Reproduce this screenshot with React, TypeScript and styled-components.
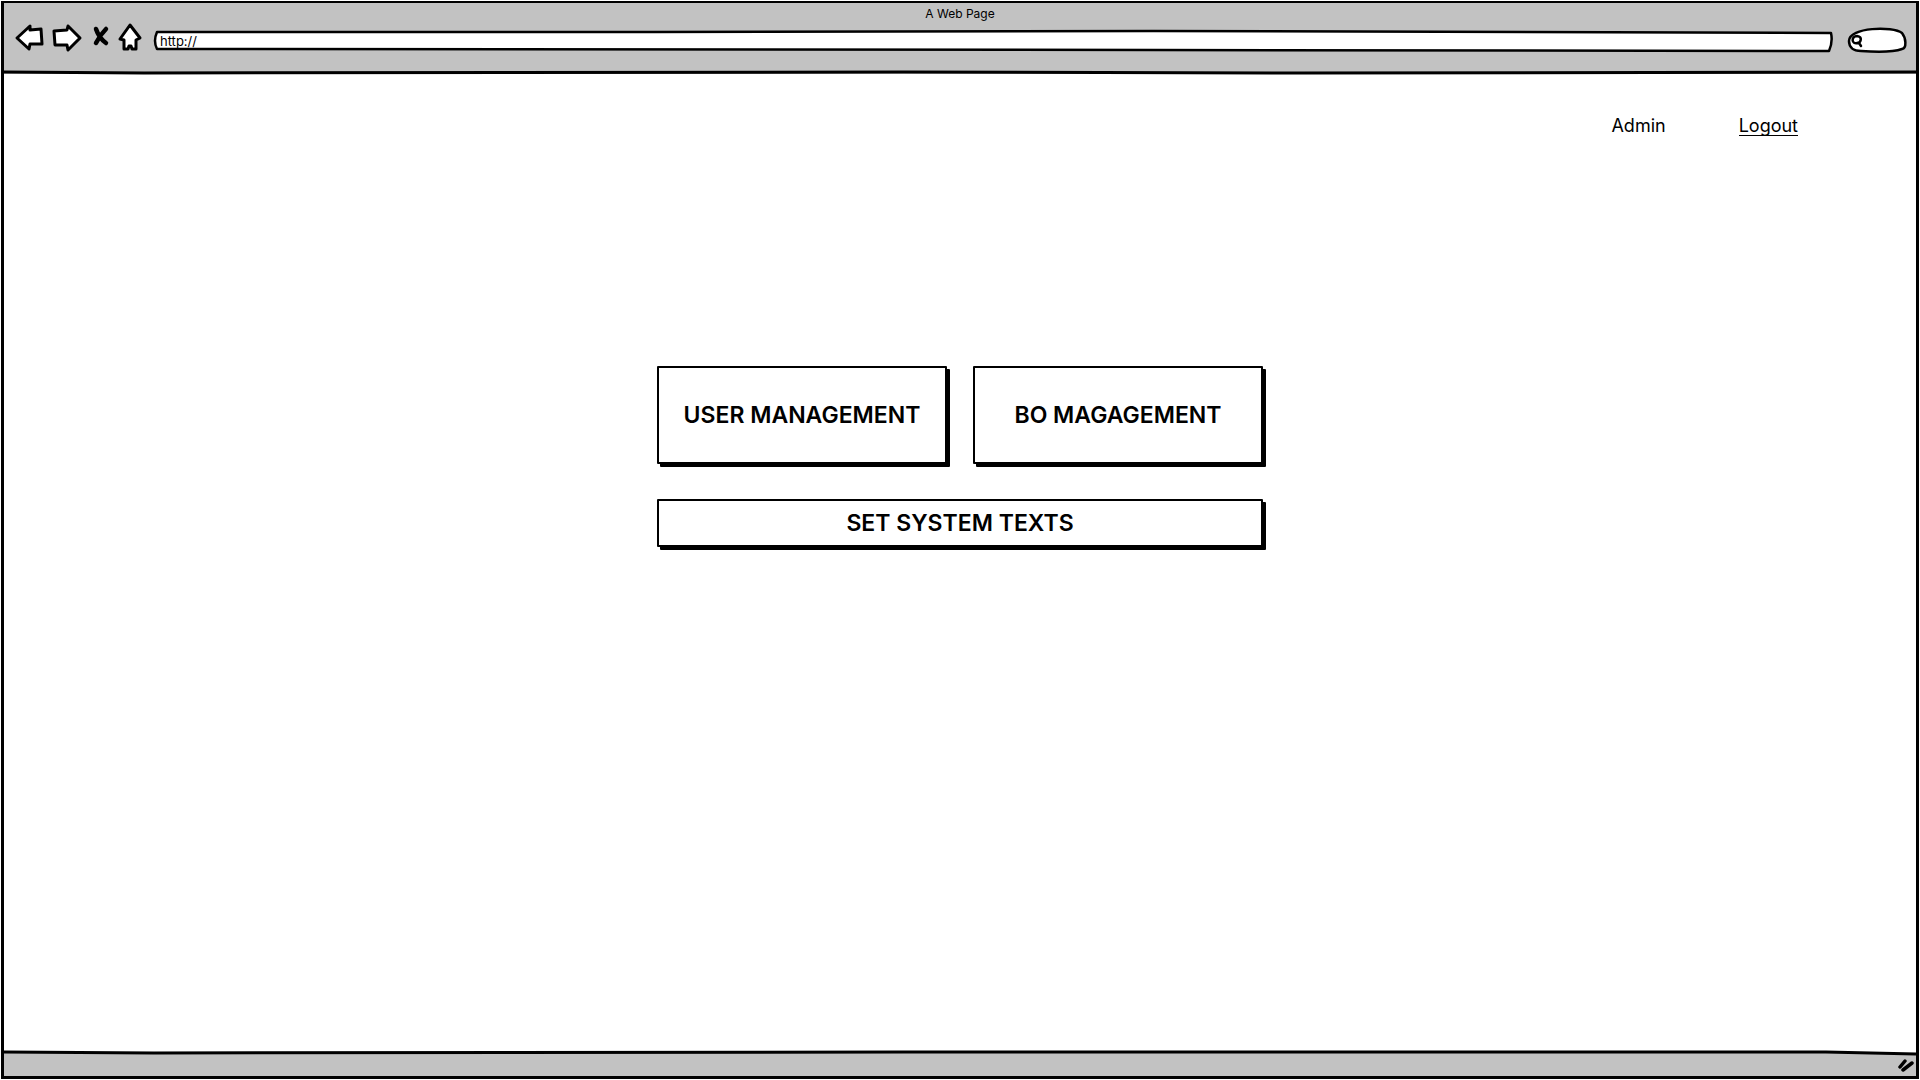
import React from "react";
import styled, { createGlobalStyle } from "styled-components";

const ink = "#000";
const chrome = "#c2c2c2";

const GlobalStyle = createGlobalStyle`
  *, *::before, *::after { box-sizing: border-box; }
  body {
    margin: 0;
    background: #fff;
    color: ${ink};
    font-family: Inter, "Open Sans", sans-serif;
  }
`;

const BrowserFrame = styled.div`
  display: flex;
  flex-direction: column;
  min-height: calc(100vh - 2px);
  margin: 1px;
  border: 3px solid ${ink};
  border-top-width: 2px;
`;

const BrowserHeader = styled.header`
  position: relative;
  height: 71px;
  background: ${chrome};
`;

const PageTitle = styled.div`
  padding-top: 3px;
  text-align: center;
  font-size: 12px;
  line-height: 16px;
`;

const Toolbar = styled.form`
  display: flex;
  align-items: flex-start;
  padding: 1px 9px 0 12px;
`;

const NavButtons = styled.div`
  display: flex;
  gap: 8px;
  margin-right: 13px;
`;

const IconButton = styled.button<{ $width: number }>`
  width: ${(p) => p.$width}px;
  height: 28px;
  padding: 0;
  border: 0;
  background: none;
  cursor: pointer;

  svg { display: block; overflow: visible; }
`;

const SketchBox = styled.label<{ $fixed?: number }>`
  position: relative;
  flex: ${(p) => (p.$fixed ? `0 0 ${p.$fixed}px` : "1 1 auto")};
  height: 24px;
  margin-top: 6px;
  margin-right: ${(p) => (p.$fixed ? 0 : 14)}px;
`;

const Sketch = styled.svg`
  position: absolute;
  inset: 0;
  width: 100%;
  height: 100%;
  overflow: visible;
  pointer-events: none;

  path {
    stroke: ${ink};
    stroke-linejoin: round;
    stroke-linecap: round;
    vector-effect: non-scaling-stroke;
  }
`;

const Field = styled.input`
  position: relative;
  display: block;
  width: 100%;
  height: 24px;
  padding: 0 6px;
  border: 0;
  outline: 0;
  background: transparent;
  color: ${ink};
  font: 13px/16px Inter, "Open Sans", sans-serif;
`;

const Edge = styled.svg<{ $side: "top" | "bottom" }>`
  position: absolute;
  left: 0;
  ${(p) => p.$side}: 0;
  width: 100%;
  height: 6px;
  overflow: visible;
`;

const Content = styled.main`
  flex: 1;
  display: flex;
  flex-direction: column;
  align-items: center;
`;

const AccountBar = styled.nav`
  display: flex;
  align-self: flex-end;
  gap: 73px;
  padding: 40px 118px 0 0;
  font-size: 18px;
  line-height: 24px;
`;

const LogoutLink = styled.a`
  color: ${ink};
  text-decoration: none;
  border-bottom: 1px solid ${ink};
  height: 22px;
`;

const Menu = styled.div`
  display: grid;
  grid-template-columns: 290px 290px;
  gap: 35px 26px;
  margin-top: 228px;
`;

const MenuButton = styled.button<{ $wide?: boolean }>`
  grid-column: ${(p) => (p.$wide ? "1 / -1" : "auto")};
  height: ${(p) => (p.$wide ? 48 : 98)}px;
  padding: 0;
  border: 2px solid ${ink};
  border-radius: 1px;
  box-shadow: 3px 3px 0 ${ink};
  background: #fff;
  color: ${ink};
  font: 600 23px/28px Inter, "Open Sans", sans-serif;
  white-space: nowrap;
  cursor: pointer;
`;

const StatusBar = styled.footer`
  position: relative;
  display: flex;
  justify-content: flex-end;
  height: 24px;
  background: ${chrome};
`;

const Grip = styled.svg`
  margin: 7px 2px 0 0;
`;

const iconStroke = { stroke: ink, strokeWidth: 3, strokeLinejoin: "round" as const, strokeLinecap: "round" as const };

export default function App() {
  return (
    <>
      <GlobalStyle />
      <BrowserFrame>
        <BrowserHeader>
          <PageTitle>A Web Page</PageTitle>
          <Toolbar onSubmit={(e) => e.preventDefault()}>
            <NavButtons>
              <IconButton type="button" aria-label="Back" $width={28}>
                <svg width="28" height="28" viewBox="0 0 28 28">
                  <path d="M1 15 L14 3 L14 7 L25 6 L26 21 L14 21 L13 26 Z" fill="#fff" {...iconStroke} />
                </svg>
              </IconButton>
              <IconButton type="button" aria-label="Forward" $width={30}>
                <svg width="30" height="28" viewBox="0 0 30 28">
                  <path d="M2 8 L15 7 L16 3 L28 15 L16 27 L15 22 L3 22 Z" fill="#fff" {...iconStroke} />
                </svg>
              </IconButton>
              <IconButton type="button" aria-label="Stop" $width={21}>
                <svg width="21" height="28" viewBox="0 0 21 28">
                  <path d="M6 6 Q9 15 16 20 M16 6 Q10 12 6 20" fill="none" stroke={ink} strokeWidth="4.500" strokeLinecap="round" />
                </svg>
              </IconButton>
              <IconButton type="button" aria-label="Home" $width={22}>
                <svg width="22" height="28" viewBox="0 0 22 28">
                  <path d="M11 2 L21 15 L17 17 L17 26 L13 26 L12 23 L10 23 L9 26 L5 26 L5 17 L1 16 Z" fill="#fff" {...iconStroke} />
                </svg>
              </IconButton>
            </NavButtons>
            <SketchBox>
              <Sketch viewBox="0 0 1680 24" preserveAspectRatio="none">
                <path d="M3 3 L500 3 L1000 2 L1678 4 Q1680 13 1676 22 L1000 21 L3 20 Q-1 12 3 3 Z" fill="#fff" strokeWidth="2.500" />
              </Sketch>
              <Field aria-label="Address" defaultValue="http://" />
            </SketchBox>
            <SketchBox $fixed={60}>
              <Sketch viewBox="0 0 60 24">
                <path d="M2 12 C2 -2 46 -3 55 4 C59 9 60 19 55 20 C44 24 28 23 14 22 C6 22 2 18 2 12 Z" fill="#fff" strokeWidth="2.500" />
                <path d="M11 14 C4 16 4 7 10 7 C16 8 14 14 10 14 M12 14 L14 17" fill="none" strokeWidth="2.500" />
              </Sketch>
              <Field aria-label="Search" />
            </SketchBox>
          </Toolbar>
          <Edge $side="bottom" viewBox="0 0 1912 6" preserveAspectRatio="none" aria-hidden="true">
            <path d="M0 4 L140 5 L900 4 L1300 5 L1912 4" fill="none" stroke={ink} strokeWidth="3" />
          </Edge>
        </BrowserHeader>
        <Content>
          <AccountBar>
            <span>Admin</span>
            <LogoutLink href="#logout">Logout</LogoutLink>
          </AccountBar>
          <Menu>
            <MenuButton type="button">USER MANAGEMENT</MenuButton>
            <MenuButton type="button">BO MAGAGEMENT</MenuButton>
            <MenuButton type="button" $wide>SET SYSTEM TEXTS</MenuButton>
          </Menu>
        </Content>
        <StatusBar>
          <Edge $side="top" viewBox="0 0 1912 6" preserveAspectRatio="none" aria-hidden="true">
            <path d="M0 0 H1912 V3 L1822 0 Z" fill="#fff" />
            <path d="M0 0 L150 1 L900 0 L1822 0 L1912 2" fill="none" stroke={ink} strokeWidth="3" />
          </Edge>
          <Grip width="16" height="14" viewBox="0 0 16 14" aria-hidden="true">
            <path d="M2 8 L7 2 M5 11 L14 4" stroke={ink} strokeWidth="3.500" strokeLinecap="round" />
          </Grip>
        </StatusBar>
      </BrowserFrame>
    </>
  );
}
